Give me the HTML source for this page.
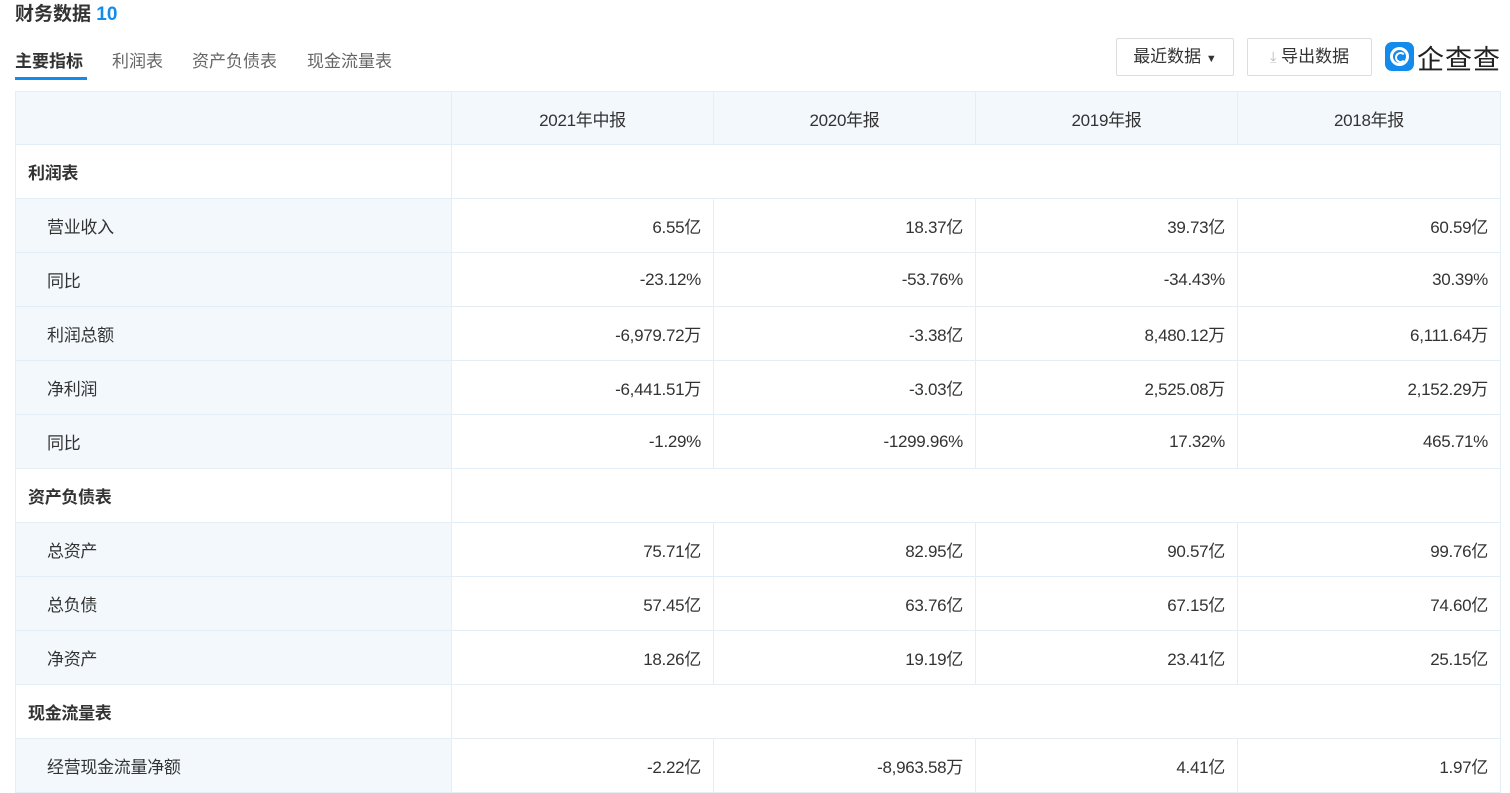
<!DOCTYPE html>
<html><head><meta charset="utf-8"><style>
body{margin:0;background:#fff;font-family:"Liberation Sans","Noto Sans CJK SC",sans-serif;color:#333;width:1510px;height:777px;overflow:hidden;position:relative}
.title{position:absolute;left:15px;top:-1px;font-size:19px;font-weight:bold;color:#333}
.title span{color:#128bed}
.tabs{position:absolute;left:15px;top:47px;font-size:17px;color:#666}
.tabs div{position:absolute;white-space:nowrap}
.tabs .on{color:#333;font-weight:bold}
.ul{position:absolute;left:15px;top:77px;width:72px;height:3px;background:#128bed}
.btn{position:absolute;top:38px;height:38px;border:1px solid #ddd;border-radius:2px;box-sizing:border-box;font-size:17px;color:#333;line-height:36px;text-align:center}
table{position:absolute;left:15px;top:91px;border-collapse:collapse;width:1485px;table-layout:fixed;font-size:17px}
td{border:1px solid #e4eef6;height:53px;padding:0 12px;text-align:right;color:#333;letter-spacing:-0.3px}
tr.h td{background:#f2f8fc;text-align:center;height:52px}
td.l{background:#f2f8fc;text-align:left;padding-left:31px}
td.s{background:#fff;text-align:left;font-weight:bold;padding-left:12px}
</style></head><body>
<div class="title">财务数据 <span>10</span></div>
<div class="tabs">
<div class="on" style="left:0">主要指标</div>
<div style="left:97px">利润表</div>
<div style="left:177px">资产负债表</div>
<div style="left:292px">现金流量表</div>
</div>
<div class="ul"></div>
<div class="btn" style="left:1116px;width:118px">最近数据 <span style="font-size:11px">▼</span></div>
<div class="btn" style="left:1247px;width:125px"><span style="color:#bbb;font-size:15px">⤓</span> 导出数据</div>
<div style="position:absolute;left:1385px;top:42px;width:29px;height:29px;border-radius:7px;background:#128bed"><div style="position:absolute;left:5px;top:5px;width:13px;height:13px;border:3px solid #fff;border-radius:50%"></div><div style="position:absolute;left:10px;top:10px;width:7px;height:7px;border:2px solid #fff;border-radius:50%;border-right-color:transparent"></div></div>
<div style="position:absolute;left:1417px;top:38px;font-size:27px;color:#222;letter-spacing:1px">企查查</div>
<table>
<colgroup><col style="width:436px"><col style="width:262px"><col style="width:262px"><col style="width:262px"><col style="width:263px"></colgroup>
<tr class="h"><td></td><td>2021年中报</td><td>2020年报</td><td>2019年报</td><td>2018年报</td></tr>
<tr><td class="s">利润表</td><td colspan="4"></td></tr>
<tr><td class="l">营业收入</td><td>6.55亿</td><td>18.37亿</td><td>39.73亿</td><td>60.59亿</td></tr>
<tr><td class="l">同比</td><td>-23.12%</td><td>-53.76%</td><td>-34.43%</td><td>30.39%</td></tr>
<tr><td class="l">利润总额</td><td>-6,979.72万</td><td>-3.38亿</td><td>8,480.12万</td><td>6,111.64万</td></tr>
<tr><td class="l">净利润</td><td>-6,441.51万</td><td>-3.03亿</td><td>2,525.08万</td><td>2,152.29万</td></tr>
<tr><td class="l">同比</td><td>-1.29%</td><td>-1299.96%</td><td>17.32%</td><td>465.71%</td></tr>
<tr><td class="s">资产负债表</td><td colspan="4"></td></tr>
<tr><td class="l">总资产</td><td>75.71亿</td><td>82.95亿</td><td>90.57亿</td><td>99.76亿</td></tr>
<tr><td class="l">总负债</td><td>57.45亿</td><td>63.76亿</td><td>67.15亿</td><td>74.60亿</td></tr>
<tr><td class="l">净资产</td><td>18.26亿</td><td>19.19亿</td><td>23.41亿</td><td>25.15亿</td></tr>
<tr><td class="s">现金流量表</td><td colspan="4"></td></tr>
<tr><td class="l">经营现金流量净额</td><td>-2.22亿</td><td>-8,963.58万</td><td>4.41亿</td><td>1.97亿</td></tr>
</table>
</body></html>
